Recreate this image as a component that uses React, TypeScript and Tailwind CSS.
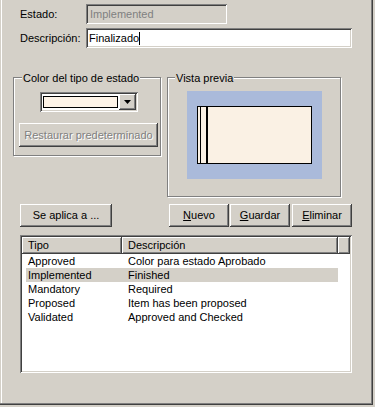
import React from "react";

const sunken =
  "shadow-[inset_1px_1px_0_#808080,inset_-1px_-1px_0_#ffffff,inset_2px_2px_0_#404040,inset_-2px_-2px_0_#d4d0c8]";
const raised =
  "shadow-[inset_-1px_-1px_0_#404040,inset_1px_1px_0_#ffffff,inset_-2px_-2px_0_#808080,inset_2px_2px_0_#d4d0c8]";
const header = "shadow-[inset_-1px_-1px_0_#404040,inset_1px_1px_0_#ffffff,inset_-2px_-2px_0_#808080]";
const etched = "border border-[#808080] shadow-[inset_1px_1px_0_#ffffff,1px_1px_0_#ffffff]";

const rows = [
  { tipo: "Approved", desc: "Color para estado Aprobado" },
  { tipo: "Implemented", desc: "Finished", selected: true },
  { tipo: "Mandatory", desc: "Required" },
  { tipo: "Proposed", desc: "Item has been proposed" },
  { tipo: "Validated", desc: "Approved and Checked" },
];

function Btn({ children, className = "" }: { children: React.ReactNode; className?: string }) {
  return (
    <div className={`h-[23px] flex items-center justify-center bg-[#d4d0c8] ${raised} ${className}`}>{children}</div>
  );
}

export default function App() {
  return (
    <div className="w-[375px] h-[407px] bg-[#d4d0c8] text-black text-[11px] leading-[13px] font-['Liberation_Sans',Arial,sans-serif]">
      <div className="w-[373px] h-[405px] flex flex-col shadow-[inset_-1px_-1px_0_#404040,inset_-2px_-2px_0_#808080,inset_1px_0_0_#d4d0c8,inset_2px_0_0_#ffffff]">
        {/* Estado */}
        <div className="flex items-center mt-[4px] h-[20px]">
          <span className="ml-[20px] w-[66px]">Estado:</span>
          <div className={`w-[141px] h-[20px] flex items-center pl-[4px] bg-[#d4d0c8] text-[#808080] ${sunken}`}>
            Implemented
          </div>
        </div>
        {/* Descripción */}
        <div className="flex items-center mt-[4px] h-[20px]">
          <span className="ml-[20px] w-[66px]">Descripción:</span>
          <div className={`w-[266px] h-[20px] flex items-center pl-[3px] bg-white ${sunken}`}>
            Finalizado
            <span className="w-[1px] h-[13px] bg-black" />
          </div>
        </div>

        {/* Group boxes */}
        <div className="flex items-start mt-[29px] ml-[13px]">
          <div className={`relative w-[148px] h-[79px] flex flex-col items-start ${etched}`}>
            <span className="absolute left-[8px] top-[-6px] px-[1px] bg-[#d4d0c8]">Color del tipo de estado</span>
            <div className={`mt-[14px] ml-[26px] w-[98px] h-[20px] p-[2px] flex bg-white ${sunken}`}>
              <div className="flex-1 pt-[2px] pl-[1px] pr-[1px]">
                <div className="h-[12px] border border-black bg-[#fdf3e7]" />
              </div>
              <div className={`w-[17px] h-[16px] flex items-center justify-center bg-[#d4d0c8] ${raised}`}>
                <svg width="7" height="4" viewBox="0 0 7 4">
                  <path d="M0 0H7L3.5 4Z" fill="#000" />
                </svg>
              </div>
            </div>
            <Btn className="mt-[11px] ml-[5px] w-[139px] !h-[24px]">
              <span className="text-[#808080] [text-shadow:1px_1px_0_#ffffff]">Restaurar predeterminado</span>
            </Btn>
          </div>

          <div className={`relative ml-[6px] w-[174px] h-[120px] ${etched}`}>
            <span className="absolute left-[7px] top-[-6px] px-[1px] bg-[#d4d0c8]">Vista previa</span>
            <div className="mt-[13px] ml-[19px] w-[135px] h-[88px] bg-[#aabada] pt-[15px] pl-[10px]">
              <div className="w-[115px] h-[58px] border border-black bg-[#faf1e4] flex">
                <div className="w-[2px]" />
                <div className="w-[1px] bg-black" />
                <div className="w-[5px]" />
                <div className="w-[2px] bg-black" />
              </div>
            </div>
          </div>
        </div>

        {/* Buttons */}
        <div className="flex mt-[7px]">
          <Btn className="ml-[20px] w-[92px]">Se aplica a ...</Btn>
          <Btn className="ml-[57px] w-[60px]">
            <span><u>N</u>uevo</span>
          </Btn>
          <Btn className="ml-[1px] w-[60px]">
            <span><u>G</u>uardar</span>
          </Btn>
          <Btn className="ml-[2px] w-[60px]">
            <span><u>E</u>liminar</span>
          </Btn>
        </div>

        {/* List */}
        <div className={`mt-[8px] ml-[20px] w-[332px] h-[138px] p-[2px] bg-white ${sunken}`}>
          <div className="flex h-[17px] bg-[#d4d0c8]">
            <div className={`w-[100px] pl-[6px] flex items-center ${header}`}>Tipo</div>
            <div className={`w-[216px] pl-[6px] flex items-center ${header}`}>Descripción</div>
            <div className={`flex-1 ${header}`} />
          </div>
          <div className="flex flex-col">
            {rows.map((r) => (
              <div
                key={r.tipo}
                className={`ml-[4px] w-[312px] h-[14px] flex items-center ${r.selected ? "bg-[#d4d0c8]" : ""}`}
              >
                <span className="w-[96px] pl-[2px]">{r.tipo}</span>
                <span className="pl-[6px]">{r.desc}</span>
              </div>
            ))}
          </div>
        </div>
      </div>
    </div>
  );
}
